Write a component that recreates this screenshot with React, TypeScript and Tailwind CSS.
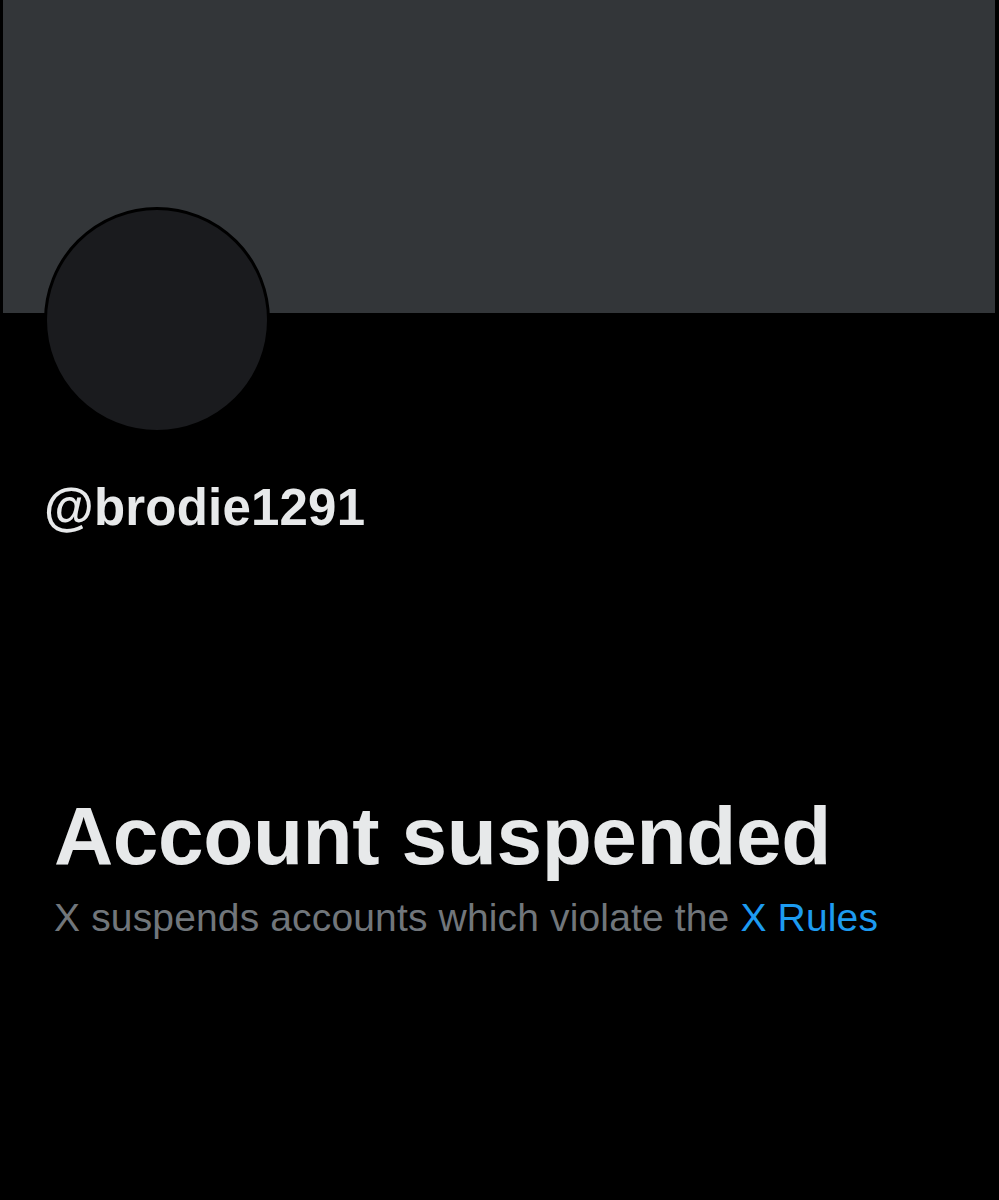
export default function App() {
  return (
    <div className="min-h-[1200px] w-[999px] bg-black" style={{ fontFamily: '"Liberation Sans", Arial, sans-serif' }}>
      <div className="ml-[3px] h-[313px] w-[992px] bg-[#333639]" />
      <div className="ml-[44px] -mt-[106px] h-[226px] w-[226px] rounded-full border-[3px] border-black bg-[#1a1b1e]" />
      <div className="ml-[44px] mt-[47px] text-[51px] font-bold leading-[56px] tracking-[0.2px] text-[#e7e9ea]">@brodie1291</div>
      <div className="ml-[54px] mt-[252px] text-[82px] font-bold leading-[96px] tracking-[-0.4px] text-[#e7e9ea]">Account suspended</div>
      <div className="ml-[54px] mt-[12px] text-[39px] leading-[44px] tracking-[0.15px] text-[#71767b]">
        X suspends accounts which violate the <span className="text-[#1d9bf0]">X Rules</span>
      </div>
    </div>
  );
}
